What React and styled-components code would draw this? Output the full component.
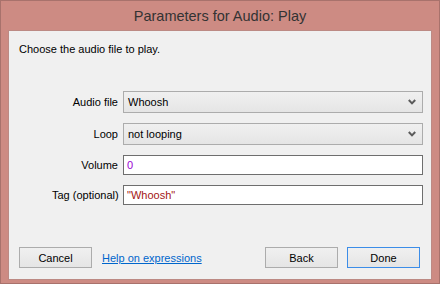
import React from 'react';
import styled, { createGlobalStyle } from 'styled-components';

const GlobalStyle = createGlobalStyle`
  html, body {
    margin: 0;
    padding: 0;
    background: #ffffff;
  }
  body {
    font-family: 'Liberation Sans', Arial, sans-serif;
  }
`;

const fields = [
  { label: 'Audio file', kind: 'select', value: 'Whoosh' },
  { label: 'Loop', kind: 'select', value: 'not looping' },
  { label: 'Volume', kind: 'input', value: '0', tone: 'number' },
  { label: 'Tag (optional)', kind: 'input', value: '"Whoosh"', tone: 'string' },
];

function Chevron() {
  return (
    <svg width="8" height="6" viewBox="0 0 8 6">
      <path d="M0.8 1 L4 4.4 L7.2 1" fill="none" stroke="#5a5a5a" strokeWidth="2" />
    </svg>
  );
}

export default function App() {
  function renderField(field) {
    return (
      <React.Fragment key={field.label}>
        <FieldLabel>{field.label}</FieldLabel>
        {field.kind === 'select' ? (
          <SelectBox>
            <span>{field.value}</span>
            <Chevron />
          </SelectBox>
        ) : (
          <TextInput readOnly defaultValue={field.value} $tone={field.tone} />
        )}
      </React.Fragment>
    );
  }

  return (
    <>
      <GlobalStyle />
      <Window>
        <TitleBar>Parameters for Audio: Play</TitleBar>
        <Client>
          <Intro>Choose the audio file to play.</Intro>
          <Form>{fields.map(renderField)}</Form>
          <Footer>
            <Button>Cancel</Button>
            <HelpLink href="#">Help on expressions</HelpLink>
            <Spacer />
            <Button>Back</Button>
            <Button $primary>Done</Button>
          </Footer>
        </Client>
      </Window>
    </>
  );
}

const Window = styled.div`
  width: 440px;
  height: 284px;
  box-sizing: border-box;
  background: #cd8b83;
  border: 1px solid #a8726c;
  display: flex;
  flex-direction: column;
`;

const TitleBar = styled.div`
  height: 29px;
  display: flex;
  align-items: center;
  justify-content: center;
  padding-top: 1px;
  box-sizing: border-box;
  font-size: 14.5px;
  color: #333333;
`;

const Client = styled.div`
  flex: 1;
  margin: 0 7px 3px 7px;
  background: #f0f0f0;
  border: 1px solid #bc8a84;
  display: flex;
  flex-direction: column;
  font-size: 11px;
  color: #000000;
`;

const Intro = styled.div`
  padding: 11px 0 0 10px;
  line-height: 14px;
`;

const Form = styled.div`
  display: grid;
  grid-template-columns: 66px 300px;
  justify-content: end;
  column-gap: 5px;
  row-gap: 10px;
  align-items: center;
  padding-right: 8px;
  margin-top: 35px;
`;

const FieldLabel = styled.div`
  text-align: right;
  white-space: nowrap;
`;

const SelectBox = styled.div`
  height: 22px;
  box-sizing: border-box;
  border: 1px solid #acacac;
  background: linear-gradient(#f0f0f0, #e5e5e5);
  display: flex;
  align-items: center;
  justify-content: space-between;
  padding: 0 6px 0 4px;
`;

const toneColors = {
  number: '#9b00d3',
  string: '#a31515',
};

const TextInput = styled.input`
  height: 20px;
  box-sizing: border-box;
  border: 1px solid #6e6e6e;
  background: #ffffff;
  padding: 0 3px;
  margin: 0;
  font-family: inherit;
  font-size: 11px;
  color: ${(p) => toneColors[p.$tone] || '#000'};
  outline: none;
`;

const Footer = styled.div`
  margin-top: auto;
  display: flex;
  align-items: center;
  padding: 0 11px 11px 10px;
`;

const Spacer = styled.div`
  flex: 1;
`;

const Button = styled.button`
  width: 73px;
  height: 21px;
  box-sizing: border-box;
  margin: 0 0 0 9px;
  padding: 0;
  border: 1px solid ${(p) => (p.$primary ? '#3c8de8' : '#acacac')};
  background: linear-gradient(#f0f0f0, #e5e5e5);
  font-family: inherit;
  font-size: 11px;
  color: #000000;
  &:first-child {
    margin-left: 0;
  }
`;

const HelpLink = styled.a`
  margin-left: 10px;
  color: #0066cc;
  text-decoration: underline;
`;
